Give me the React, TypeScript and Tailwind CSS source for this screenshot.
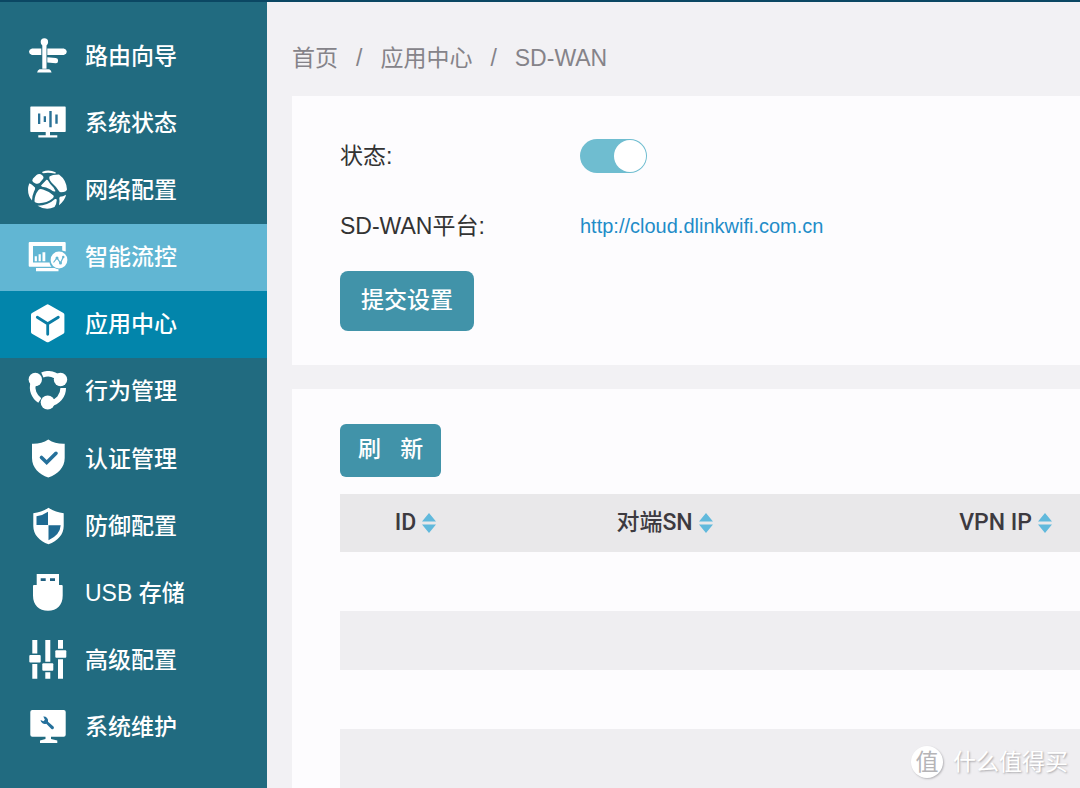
import { FC, PropsWithChildren, ReactNode } from "react";

interface MenuItem {
    label: string;
    icon: ReactNode;
    state?: "hover" | "active";
}

interface ColumnProps {
    title: string;
    className: string;
}

const Icon: FC<PropsWithChildren> = ({ children }) => (
    <svg viewBox="0 0 40 40" className="size-10 shrink-0" fill="#fff" aria-hidden="true">
        {children}
    </svg>
);

const SHIELD = "M20.3 .5C15.500 4 10 5 4 4.800V19c0 9.500 7 16.500 16.300 19.600C29.600 35.500 36.700 28.500 36.700 19V4.800C30.600 5 25 4 20.300 .5Z";

const menu: MenuItem[] = [
    {
        label: "路由向导",
        icon: (
            <Icon>
                <path d="M4 12.500h9.300v6.400H4q-3-1-3-3.200t3-3.200zM19.300 12.500h16.500q3 1 3 3.200t-3 3.200H19.300zM19.300 21.200l8.500.8q2.500.4 2.300 2.700-.1 2.600-2.300 2.500l-8.500-.8z" />
                <circle cx="16.400" cy="6" r="3.700" />
                <path d="M14.300 8h4.200v24.700h-4.200zM11.500 33.200h9.700q2 .8 2.400 3.300H9.100q.4-2.500 2.400-3.300z" />
            </Icon>
        ),
    },
    {
        label: "系统状态",
        icon: (
            <Icon>
                <path d="M3 3.500h34q.7 0 .7.7v24q0 .7-.7.700H22v3.300h7.300v2.300h-19v-2.300h7.400v-3.300H3q-.7 0-.7-.7v-24q0-.7.7-.7z" />
                <path fill="#2a7196" d="M10 10.500h2.300V21H10zM15.700 13.200H18v5.700h-2.300zM21.300 7.900h2.400v16.300h-2.400zM27.300 11.500h2.400v9.300h-2.400z" />
            </Icon>
        ),
    },
    {
        label: "网络配置",
        icon: (
            <Icon>
                <path d="M14.500 1.700Q21 -1 27.500 2.200Q28.500 3.500 26.500 3.600Q20 2 15.500 3.300Q13.500 3 14.500 1.700Z" />
                <path d="M8.500 5Q11.500 2.800 14.500 5.500Q16.500 7.500 14.500 9.500L11.500 13Q9.500 14.300 7 13.200L5 12Q3.500 10.500 5 8.500Z" />
                <path d="M21.500 6.500Q24 4.500 31 4.500Q38.500 10 39 19.500Q38.500 22 33 22.300Q31.500 22.500 30.500 20.500Q28.500 17 23.500 12.500Q20.500 9 21.500 6.500Z" />
                <path d="M13 15.500L18.500 9.800Q19.500 9.500 20.300 11Q21.500 13.500 25.500 17.500L27.500 21Q26 22.500 22.500 19.500Q18 17 14 16.700Z" />
                <path d="M1.200 13.500Q2.500 13 4.200 15L7 17.500Q7.500 19 6 21.500Q4 26 4 30.500Q-.8 25 .2 17Z" />
                <path d="M10.500 20Q12 18.500 15 19.500Q21.500 21.500 25.500 25.500Q26.500 27 24.500 28.500Q19 33 11 33.200Q6.500 33 6.500 31Q6.500 25 10.500 20Z" />
                <path d="M9.500 35.700Q20 35.500 27 29Q29 28.500 28.700 30.500Q28.500 34.500 26.500 37Q18 41 9.500 35.700Z" />
                <path d="M32 26.700Q35 26.500 38 24.700Q37.500 29.500 31 35.300Q32 31 31.300 28Z" />
            </Icon>
        ),
    },
    {
        label: "智能流控",
        state: "hover",
        icon: (
            <Icon>
                <path d="M1.700 5h35q1 0 1 1v8.500l-3.500-1V9H5v16.500h16.500q.3 2.500 2 4.300H1.700q-1 0-1-1V6q0-1 1-1zM8 31h18.500q1.500 1 4 1.300v2H8z" />
                <path d="M6.700 19.200h2.200v5H6.700zM10.600 17.300h2.200v6.900h-2.200zM14.500 15.300h2.800v8.900h-2.800z" />
                <circle cx="31" cy="23" r="8.400" />
                <path d="M25.500 25.500l3.500-4.500 3.500 5 3-6.500" fill="none" stroke="#62b6d2" strokeWidth="1.200" />
                <g fill="#62b6d2">
                    <circle cx="29" cy="21" r="1.500" />
                    <circle cx="32.500" cy="26" r="1.500" />
                    <circle cx="35.300" cy="20" r="1.200" />
                </g>
            </Icon>
        ),
    },
    {
        label: "应用中心",
        state: "active",
        icon: (
            <Icon>
                <path d="M18.500 .7q1.200-.7 2.400 0l14.500 8.200q1 .6 1 1.800v17.200q0 1.200-1 1.800l-14.500 8.200q-1.200.7-2.400 0L4 29.700q-1-.6-1-1.800V10.700q0-1.200 1-1.800z" />
                <path d="M9.300 13.200l10.400 6.600 10.600-6.600M19.700 19.800v10.500" fill="none" stroke="#0b7da5" strokeWidth="2.800" strokeLinecap="round" />
            </Icon>
        ),
    },
    {
        label: "行为管理",
        icon: (
            <Icon>
                <g fill="none" stroke="#fff" strokeWidth="5.600">
                    <path d="M14.300 4A15 15 0 0 1 32 8.500" />
                    <path d="M35.200 17A15.500 15.500 0 0 1 22 32.500" />
                    <path d="M5.300 12A15.500 15.500 0 0 0 11.800 29.500" />
                </g>
                <circle cx="7.300" cy="8.500" r="6.700" />
                <circle cx="32.500" cy="8.500" r="6.700" />
                <circle cx="19.700" cy="31.500" r="7" />
            </Icon>
        ),
    },
    {
        label: "认证管理",
        icon: (
            <Icon>
                <path d={SHIELD} />
                <path d="M13.500 18.500l5.200 5 9.300-9.200" fill="none" stroke="#25709b" strokeWidth="3.600" strokeLinecap="round" />
            </Icon>
        ),
    },
    {
        label: "防御配置",
        icon: (
            <Icon>
                <path d="M20.500 1.700Q13.500 6.500 5.300 7.200V20c0 8.500 6 15 15.200 18.300C29.700 35 35.700 28.500 35.700 20V7.200Q27.500 6.500 20.500 1.700Z" />
                <path fill="#1f6a92" d="M20 5.700v13.200H8.500V10.200Q15 9.300 20 5.700zM20.500 19.300h12.200q-.6 9.700-12.200 15z" />
            </Icon>
        ),
    },
    {
        label: "USB 存储",
        icon: (
            <Icon>
                <path d="M8.700 1H31v11h2.700q1 0 1 1v9.500C34.700 32 29 37.700 20 37.700S5 32 5 22.500V13q0-1 1-1h2.700z" />
                <path fill="#1f5f80" d="M12.700 5.300h5V8h-5zM22 5.300h5V8h-5z" />
            </Icon>
        ),
    },
    {
        label: "高级配置",
        icon: (
            <Icon>
                <path d="M4.300 0h5v13.500h-5zM4.300 24h5v14.700h-5zM17.300 0h5v21.800h-5zM17.300 32.200h5v6.500h-5zM30 0h5v8.800h-5zM30 19.200h5v19.500h-5z" />
                <rect x="1.300" y="15" width="11.400" height="7.600" rx="1" />
                <rect x="14.300" y="23.300" width="11" height="7.400" rx="1" />
                <rect x="27.300" y="10.300" width="11" height="7.400" rx="1" />
            </Icon>
        ),
    },
    {
        label: "系统维护",
        icon: (
            <Icon>
                <path d="M4.300 3h31.400q2 0 2 2v22.700q0 2-2 2H23V32l6.300 1.500V36H12v-2.500l5.500-1.500v-2.300H4.300q-2 0-2-2V5q0-2 2-2z" />
                <path fill="#25709b" d="M15.300 9.500a4.300 4.300 0 0 1 4.700 5.300l5.500 4.700q1 1.200 0 2.200t-2.300 0l-4.900-5a4.300 4.300 0 0 1-5.800-3.600l3 1.200 1.400-1.600z" />
            </Icon>
        ),
    },
];

const itemStyles = {
    normal: "",
    hover: "bg-[#61b6d3]",
    active: "bg-[#0285ab]",
};

const Sidebar = () => (
    <nav className="w-[267px] shrink-0 bg-[#216b80] py-5">
        <ul className="grid min-h-[739px] auto-rows-fr">
            {menu.map(({ label, icon, state }) => (
                <li key={label} className="flex">
                    <a
                        href="#"
                        className={`flex flex-1 items-center gap-[17px] pl-7 text-[23px] font-medium text-white ${itemStyles[state ?? "normal"]}`}
                    >
                        {icon}
                        {label}
                    </a>
                </li>
            ))}
        </ul>
    </nav>
);

const Column = ({ title, className }: ColumnProps) => (
    <th scope="col" className={`p-0 font-medium ${className}`}>
        <button type="button" className="inline-flex items-center gap-[6px]">
            {title}
            <svg viewBox="0 0 14 20" className="h-5 w-[14px]" fill="#61b9dc" aria-hidden="true">
                <path d="M7 0l7 8.500H0zM7 20l7-8.500H0z" />
            </svg>
        </button>
    </th>
);

const Watermark = () => (
    <div className="absolute right-3 bottom-[10px] flex items-center gap-[10px] text-[23px] text-white">
        <span className="flex size-8 items-center justify-center rounded-full bg-white text-[23px] text-[#b5b4b7] shadow-[1px_1px_2px_#b5b4b8]">
            值
        </span>
        <span className="[text-shadow:1px_1px_2px_#a9a8ac]">什么值得买</span>
    </div>
);

export default function App() {
    return (
        <div className="relative flex min-h-screen overflow-hidden border-t-2 border-[#0b4763] bg-[#f2f1f4] font-['Liberation_Sans','Noto_Sans_CJK_SC',sans-serif] text-[23px] leading-8 text-[#333]">
            <Sidebar />
            <main className="flex min-w-0 flex-1 flex-col pl-[25px]">
                <nav aria-label="breadcrumb" className="flex gap-[18px] pt-10 pb-[22px] text-[#858389]">
                    <a href="#">首页</a>
                    <span>/</span>
                    <a href="#">应用中心</a>
                    <span>/</span>
                    <span>SD-WAN</span>
                </nav>

                <section className="mb-6 bg-[#fdfcfe] px-12 pt-10 pb-[34px]">
                    <div className="flex h-10 items-center">
                        <label htmlFor="status" className="w-60">状态:</label>
                        <input
                            id="status"
                            type="checkbox"
                            defaultChecked
                            className="flex h-[34px] w-[67px] appearance-none items-center rounded-full bg-[#bbb] p-px before:size-8 before:rounded-full before:bg-white checked:justify-end checked:bg-[#6fbdd0]"
                        />
                    </div>
                    <div className="mt-[30px] flex h-10 items-center">
                        <span className="w-60">SD-WAN平台:</span>
                        <a href="#" className="text-[20px] text-[#1f8cc8]">http://cloud.dlinkwifi.com.cn</a>
                    </div>
                    <button type="button" className="mt-[25px] block h-[60px] rounded-lg bg-[#4193a9] px-[21px] pb-[3px] font-medium text-white">
                        提交设置
                    </button>
                </section>

                <section className="flex-1 bg-[#fdfcfe] pt-[35px] pl-12">
                    <button type="button" className="block h-[53px] rounded-md bg-[#4193a9] px-[18px] pb-[3px] font-medium whitespace-pre text-white">
                        刷   新
                    </button>
                    <table className="mt-[17px] w-full table-fixed border-collapse">
                        <thead className="bg-[#e9e8ea] font-[Roboto,'Noto_Sans_CJK_SC',sans-serif] text-[#3d3a40]">
                            <tr className="h-[58px]">
                                <Column title="ID" className="w-[151px]" />
                                <Column title="对端SN" className="w-[347px]" />
                                <Column title="VPN IP" className="pr-7 text-right" />
                            </tr>
                        </thead>
                        <tbody>
                            {[0, 1, 2, 3].map((row) => (
                                <tr key={row} className="h-[59px] even:bg-[#efeef1]">
                                    <td colSpan={3} />
                                </tr>
                            ))}
                        </tbody>
                    </table>
                </section>
            </main>
            <Watermark />
        </div>
    );
}
